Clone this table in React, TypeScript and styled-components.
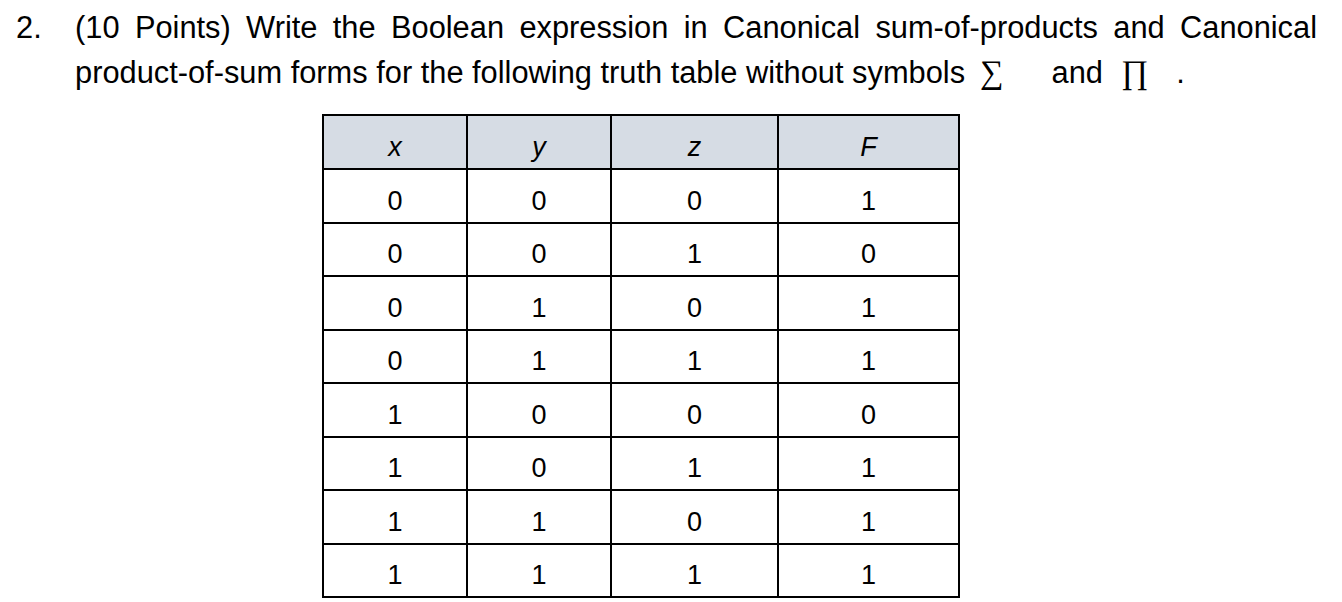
import React from "react";
import styled, { createGlobalStyle } from "styled-components";

const Global = createGlobalStyle`
  html, body { margin: 0; padding: 0; background: #fff; }
  body { font-family: "Liberation Sans", Arial, sans-serif; color: #000; }
`;

const Page = styled.div`
  width: 1342px;
  height: 602px;
  overflow: hidden;
  padding-top: 5px;
  box-sizing: border-box;
`;

const Question = styled.div`
  display: flex;
  font-size: 30.8px;
  line-height: 45px;
`;

const Num = styled.div`
  width: 59px;
  padding-left: 16px;
  flex: none;
`;

const Body = styled.div`
  width: 1242px;
`;

const Justified = styled.div`
  text-align: justify;
  text-align-last: justify;
  white-space: nowrap;
`;

const Line = styled.div`
  white-space: nowrap;
`;

const Sym = styled.span<{ $before: number; $after: number }>`
  font-family: "Liberation Serif", "Times New Roman", serif;
  font-size: 33px;
  line-height: 1;
  margin-left: ${(p) => p.$before}px;
  margin-right: ${(p) => p.$after}px;
`;

const TableWrap = styled.div`
  margin-top: 19px;
  margin-left: 322px;
`;

const Table = styled.table`
  border-collapse: collapse;
  font-size: 27px;
  table-layout: fixed;
`;

const HeadCell = styled.th<{ $w: number }>`
  width: ${(p) => p.$w}px;
  height: 41px;
  padding: 0;
  padding-top: 11px;
  background: #d6dce4;
  border: 2px solid #000;
  font-weight: normal;
  font-style: italic;
  text-align: center;
  vertical-align: middle;
`;

const Cell = styled.td`
  height: 40.5px;
  padding: 0;
  padding-top: 11px;
  border: 2px solid #000;
  text-align: center;
  vertical-align: middle;
`;

const cols = [
  { label: "x", w: 142 },
  { label: "y", w: 142 },
  { label: "z", w: 165 },
  { label: "F", w: 179 },
];

const rows = [
  [0, 0, 0, 1],
  [0, 0, 1, 0],
  [0, 1, 0, 1],
  [0, 1, 1, 1],
  [1, 0, 0, 0],
  [1, 0, 1, 1],
  [1, 1, 0, 1],
  [1, 1, 1, 1],
];

export default function App() {
  return (
    <>
      <Global />
      <Page>
        <Question>
          <Num>2.</Num>
          <Body>
            <Justified>
              (10 Points) Write the Boolean expression in Canonical sum-of-products and Canonical
            </Justified>
            <Line>
              product-of-sum forms for the following truth table without symbols
              <Sym $before={15} $after={48}>∑</Sym>and<Sym $before={18} $after={28}>∏</Sym>.
            </Line>
          </Body>
        </Question>
        <TableWrap>
          <Table>
            <thead>
              <tr>
                {cols.map((c) => (
                  <HeadCell key={c.label} $w={c.w}>
                    {c.label}
                  </HeadCell>
                ))}
              </tr>
            </thead>
            <tbody>
              {rows.map((r, i) => (
                <tr key={i}>
                  {r.map((v, j) => (
                    <Cell key={j}>{v}</Cell>
                  ))}
                </tr>
              ))}
            </tbody>
          </Table>
        </TableWrap>
      </Page>
    </>
  );
}
